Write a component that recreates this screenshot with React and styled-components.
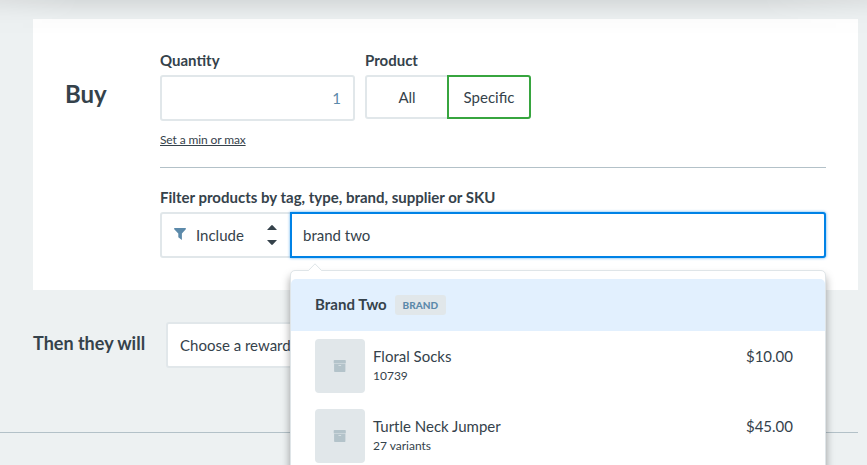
import React from "react";
import styled, { createGlobalStyle } from "styled-components";

const GlobalStyle = createGlobalStyle`
  *, *::before, *::after { box-sizing: border-box; }
  html, body { margin: 0; overflow: hidden; }
  body {
    font-family: "Lato", sans-serif;
    font-size: 15px;
    line-height: 20px;
    color: #35424b;
    background: #edf1f2;
  }
  button, input { font: inherit; color: inherit; }
`;

const Page = styled.main`
  position: relative;
  height: 465px;
  padding-top: 19px;
  overflow: hidden;
`;

const TopShade = styled.div`
  position: absolute;
  inset: 0 0 auto;
  height: 36px;
  background: linear-gradient(
    rgba(0, 0, 0, 0.095) 0,
    rgba(0, 0, 0, 0.055) 8px,
    rgba(0, 0, 0, 0.015) 18px,
    rgba(0, 0, 0, 0.006) 25px,
    transparent
  );
  -webkit-mask-image: linear-gradient(90deg, rgba(0, 0, 0, 0.65), #000 80px, #000 760px, rgba(0, 0, 0, 0.65));
  mask-image: linear-gradient(90deg, rgba(0, 0, 0, 0.65), #000 80px, #000 760px, rgba(0, 0, 0, 0.65));
  pointer-events: none;
`;

const Card = styled.section`
  display: grid;
  grid-template-columns: 95px 1fr;
  height: 271px;
  margin: 0 9px 0 33px;
  padding: 31px 32px 0;
  background: #fff;
`;

const CardTitle = styled.h2`
  margin: 29px 0 0;
  font-size: 24px;
  line-height: 30px;
  font-weight: 700;
`;

const Fields = styled.div`
  display: flex;
  gap: 10px;
  height: 118px;
  border-bottom: 1px solid #b3c1c8;
`;

const Field = styled.div`
  display: flex;
  flex-direction: column;
  align-items: flex-start;
`;

const Label = styled.label`
  display: block;
  height: 25px;
  font-weight: 700;
`;

const QuantityInput = styled.input`
  width: 195px;
  height: 46px;
  padding: 0 12px;
  border: 2px solid #e1e7ea;
  border-radius: 3px;
  outline: 0;
  background: #fff;
  text-align: right;
  color: #5c8aaa;
`;

const SmallLink = styled.a`
  margin-top: 9px;
  font-size: 12px;
  letter-spacing: -0.12px;
  text-decoration: underline;
`;

const Toggle = styled.div`
  display: flex;
`;

const ToggleOption = styled.button`
  width: 84px;
  height: 44px;
  padding: 0;
  background: #fff;
  border: 2px solid ${(p) => (p.$selected ? "#37a53f" : "#e1e7ea")};
  border-radius: ${(p) => (p.$selected ? "0 3px 3px 0" : "3px 0 0 3px")};
  margin-left: ${(p) => (p.$selected ? "-2px" : "0")};
`;

const Filter = styled.div`
  padding-top: 19px;
`;

const FilterRow = styled.div`
  display: flex;
`;

const IncludeSelect = styled.button`
  display: flex;
  align-items: center;
  width: 132px;
  height: 46px;
  margin-right: -2px;
  padding: 0 13px 0 12px;
  border: 2px solid #e1e7ea;
  border-radius: 3px 0 0 3px;
  background: #fff;

  span { flex: 1; margin-left: 10px; text-align: left; }
`;

const SearchWrap = styled.div`
  position: relative;
  flex: 1;
`;

const SearchInput = styled.input`
  display: block;
  width: 100%;
  height: 46px;
  padding: 0 11px;
  border: 2px solid #0082e6;
  border-radius: 0 3px 3px 0;
  outline: 0;
  background: #fff;
  box-shadow: 0 0 3px rgba(0, 130, 230, 0.65);
`;

const Popover = styled.div`
  position: absolute;
  z-index: 2;
  top: 58px;
  left: 0;
  width: 536px;
  height: 260px;
  padding-top: 8px;
  border: 1px solid #dfe5e8;
  border-radius: 5px;
  background: #fff;
  box-shadow: 0 6px 9px rgba(0, 0, 0, 0.36);
`;

const Pointer = styled.svg`
  position: absolute;
  top: -8px;
  left: 16px;
`;

const BrandRow = styled.div`
  display: flex;
  align-items: center;
  height: 52px;
  padding-left: 24px;
  border-radius: 5px 5px 0 0;
  background: #e2f0fe;
  font-weight: 700;
`;

const BrandName = styled.span`
  padding-bottom: 2px;
  letter-spacing: 0.06px;
`;

const Badge = styled.span`
  width: 51px;
  height: 20px;
  margin-left: 8px;
  border-radius: 3px;
  background: #e1e7ea;
  color: #5c8aaa;
  font-size: 10px;
  line-height: 21px;
  font-weight: 900;
  text-align: center;
`;

const ProductRow = styled.div`
  display: flex;
  height: 70px;
  padding: 8px 32px 0 24px;
`;

const Thumb = styled.div`
  display: flex;
  align-items: center;
  justify-content: center;
  width: 50px;
  height: 54px;
  margin-right: 8px;
  border-radius: 4px;
  background: #e1e7ea;
`;

const ProductText = styled.div`
  flex: 1;
  padding-top: 7px;
`;

const Sku = styled.div`
  font-size: 12px;
`;

const Price = styled.div`
  padding-top: 7px;
`;

const RewardBar = styled.section`
  display: flex;
  height: 143px;
  margin-right: 9px;
  padding: 32px 0 0 33px;
  border-bottom: 1px solid #b3c1c8;
`;

const RewardTitle = styled.h3`
  width: 133px;
  margin: 9px 0 0;
  font-size: 18px;
  line-height: 24px;
  font-weight: 700;
`;

const RewardSelect = styled.button`
  width: 240px;
  height: 46px;
  padding: 0 12px;
  border: 2px solid #e1e7ea;
  border-radius: 3px;
  background: #fff;
  text-align: left;
`;

const FunnelIcon = () => (
  <svg width="12" height="14" viewBox="0 0 12 14">
    <path d="M.2 0h11.6v1.2L7.9 5.6V12L4.3 9.2V5.6L.2 1.2Z" fill="#5c8aaa" />
  </svg>
);

const SortIcon = () => (
  <svg width="10" height="20" viewBox="0 0 10 20">
    <path d="M0 5 4.2.4Q5-.3 5.8.4L10 5ZM0 15h10l-4.2 4.6Q5 20.3 4.2 19.6Z" fill="#35424b" />
  </svg>
);

const BoxIcon = () => (
  <svg width="14" height="12" viewBox="0 0 14 12">
    <path
      d="M1.4 0h10.7q.7 0 .7.7V3.2H.7V.7Q.7 0 1.4 0ZM1.1 3.8h11.3v7.5q0 .7-.7.7H1.8q-.7 0-.7-.7ZM5.5 5v.8h2.6V5Z"
      fill="#b3c3ca"
      fillRule="evenodd"
    />
  </svg>
);

const products = [
  { name: "Floral Socks", detail: "10739", price: "$10.00" },
  { name: "Turtle Neck Jumper", detail: "27 variants", price: "$45.00" },
];

export default function App() {
  return (
    <>
      <GlobalStyle />
      <Page>
        <Card>
          <CardTitle>Buy</CardTitle>
          <div>
            <Fields>
              <Field>
                <Label htmlFor="quantity">Quantity</Label>
                <QuantityInput id="quantity" defaultValue="1" />
                <SmallLink>Set a min or max</SmallLink>
              </Field>
              <Field>
                <Label as="div">Product</Label>
                <Toggle>
                  <ToggleOption>All</ToggleOption>
                  <ToggleOption $selected>Specific</ToggleOption>
                </Toggle>
              </Field>
            </Fields>
            <Filter>
              <Label htmlFor="filter">Filter products by tag, type, brand, supplier or SKU</Label>
              <FilterRow>
                <IncludeSelect>
                  <FunnelIcon />
                  <span>Include</span>
                  <SortIcon />
                </IncludeSelect>
                <SearchWrap>
                  <SearchInput id="filter" defaultValue="brand two" />
                  <Popover>
                    <Pointer width="17" height="9" viewBox="0 0 17 9">
                      <path d="M0 9 1.5 7.5 8 .8l6.5 6.7L16 9Z" fill="#fff" />
                      <path d="M0 7.5h1.5L8 .8l6.5 6.7H16" fill="none" stroke="#dfe5e8" />
                    </Pointer>
                    <BrandRow>
                      <BrandName>Brand Two</BrandName>
                      <Badge>BRAND</Badge>
                    </BrandRow>
                    {products.map((p) => (
                      <ProductRow key={p.name}>
                        <Thumb>
                          <BoxIcon />
                        </Thumb>
                        <ProductText>
                          {p.name}
                          <Sku>{p.detail}</Sku>
                        </ProductText>
                        <Price>{p.price}</Price>
                      </ProductRow>
                    ))}
                  </Popover>
                </SearchWrap>
              </FilterRow>
            </Filter>
          </div>
        </Card>
        <RewardBar>
          <RewardTitle>Then they will</RewardTitle>
          <RewardSelect>Choose a reward</RewardSelect>
        </RewardBar>
        <TopShade />
      </Page>
    </>
  );
}
